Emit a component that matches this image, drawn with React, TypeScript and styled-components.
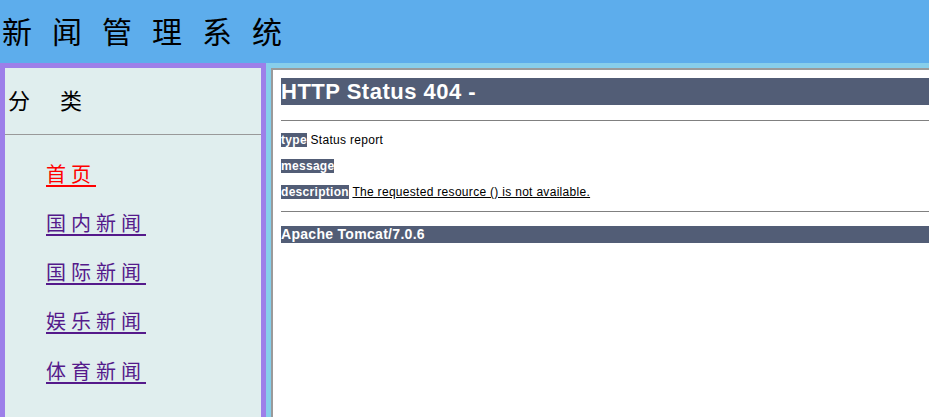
import styled, { createGlobalStyle } from "styled-components";

const GlobalStyle = createGlobalStyle`
  html, body {
    margin: 0;
    padding: 0;
    height: 100%;
    overflow: hidden;
    background: #ffffff;
  }
  #root {
    height: 100%;
  }
`;

const Page = styled.div`
  display: flex;
  flex-direction: column;
  height: 100vh;
`;

const Header = styled.header`
  flex: 0 0 63px;
  display: flex;
  align-items: center;
  background: #5dadec;
  padding-left: 2px;
  box-sizing: border-box;
`;

const SiteTitle = styled.h1`
  margin: 0;
  font-family: "Noto Sans CJK SC", serif;
  font-weight: normal;
  font-size: 30px;
  letter-spacing: 20px;
  line-height: 30px;
  color: #000;
  margin-top: -3px;
`;

const Body = styled.div`
  flex: 1;
  display: flex;
  min-height: 0;
`;

const Sidebar = styled.nav`
  flex: 0 0 266px;
  box-sizing: border-box;
  border: 5px solid #9d7fe9;
  border-bottom: none;
  background: #e0eeee;
  display: flex;
  flex-direction: column;
`;

const SidebarTitle = styled.div`
  height: 67px;
  display: flex;
  align-items: center;
  padding-left: 3px;
  padding-bottom: 4px;
  font-family: "Noto Sans CJK SC", serif;
  font-size: 22px;
  letter-spacing: 30px;
  color: #000;
  border-bottom: 1px solid #999;
  box-sizing: border-box;
`;

const NavList = styled.ul`
  list-style: none;
  margin: 0;
  padding: 14px 0 0 41px;
  display: flex;
  flex-direction: column;
`;

const NavItem = styled.li`
  height: 49.25px;
  display: flex;
  align-items: center;
`;

const NavLink = styled.a<{ $active?: boolean }>`
  font-family: "Noto Sans CJK SC", serif;
  font-size: 20px;
  line-height: 24px;
  letter-spacing: 5px;
  color: ${({ $active }) => ($active ? "#ff0000" : "#551a8b")};
  text-decoration: underline;
  text-underline-offset: 3px;
  cursor: pointer;
`;

const ContentArea = styled.div`
  flex: 1;
  min-width: 0;
  background: #87ceeb;
  padding: 5px 0 0 5px;
  display: flex;
`;

const Frame = styled.div`
  flex: 1;
  min-width: 0;
  background: #fff;
  border-top: 2px solid #9a9a9a;
  border-left: 2px solid #9a9a9a;
  overflow: hidden;
`;

const ErrorDoc = styled.div`
  width: 700px;
  padding: 8px;
  font-family: Tahoma, "Liberation Sans", Arial, sans-serif;
`;

const ErrorTitle = styled.h1`
  margin: 0 0 14.7px;
  font-size: 22px;
  line-height: 27px;
  font-weight: bold;
  letter-spacing: 0.5px;
  color: #fff;
  background: #525d76;
`;

const Rule = styled.hr`
  margin: 0;
  border: none;
  height: 1px;
  background: #808080;
`;

const Para = styled.p`
  margin: 12px 0;
  font-size: 12px;
  line-height: 14px;
  letter-spacing: 0.3px;
  color: #000;
  background: #fff;
`;

const Label = styled.b`
  color: #fff;
  background: #525d76;
`;

const Footer = styled.h3`
  margin: 14px 0;
  font-size: 14px;
  line-height: 17px;
  font-weight: bold;
  letter-spacing: 0.3px;
  color: #fff;
  background: #525d76;
`;

const categories = [
  { id: 1, label: "首页", active: true },
  { id: 2, label: "国内新闻" },
  { id: 3, label: "国际新闻" },
  { id: 4, label: "娱乐新闻" },
  { id: 5, label: "体育新闻" },
];

export default function App() {
  return (
    <Page>
      <GlobalStyle />
      <Header>
        <SiteTitle>新闻管理系统</SiteTitle>
      </Header>
      <Body>
        <Sidebar>
          <SidebarTitle>分类</SidebarTitle>
          <NavList>
            {categories.map((c) => (
              <NavItem key={c.id}>
                <NavLink $active={c.active}>{c.label}</NavLink>
              </NavItem>
            ))}
          </NavList>
        </Sidebar>
        <ContentArea>
          <Frame>
            <ErrorDoc>
              <ErrorTitle>HTTP Status 404 - </ErrorTitle>
              <Rule />
              <Para>
                <Label>type</Label> Status report
              </Para>
              <Para>
                <Label>message</Label> <u></u>
              </Para>
              <Para>
                <Label>description</Label>{" "}
                <u>The requested resource () is not available.</u>
              </Para>
              <Rule />
              <Footer>Apache Tomcat/7.0.6</Footer>
            </ErrorDoc>
          </Frame>
        </ContentArea>
      </Body>
    </Page>
  );
}
